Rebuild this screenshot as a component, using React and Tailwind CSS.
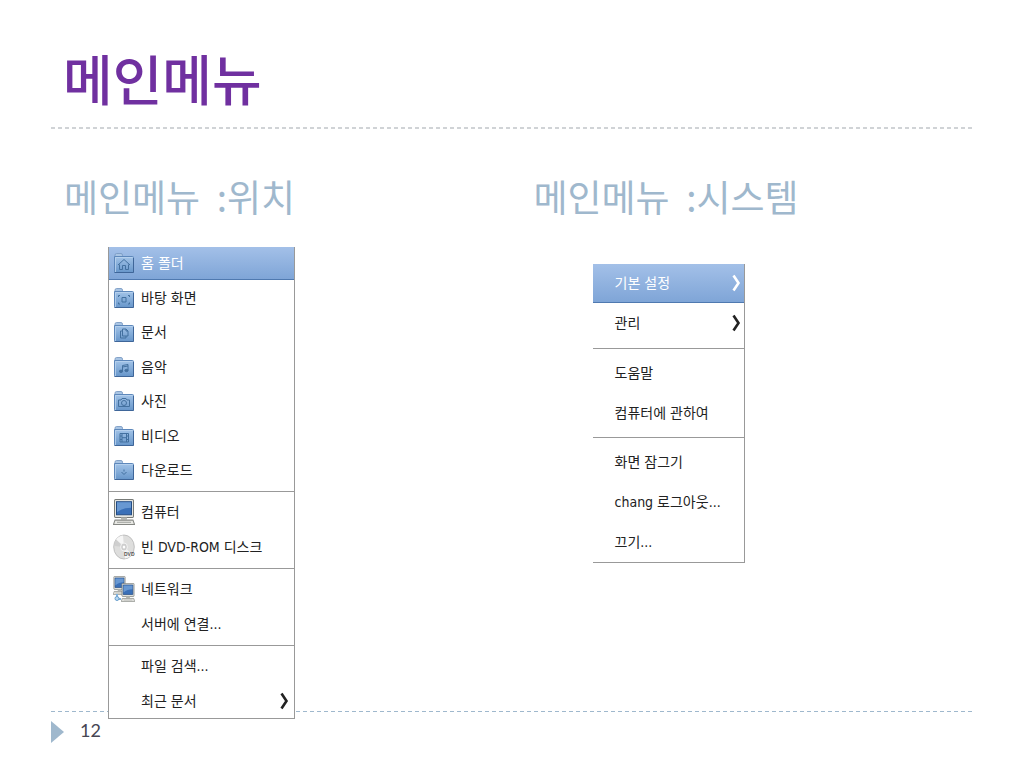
import React from "react";

const Folder = ({ children }) => (
  <svg viewBox="0 0 22 22" className="size-[22px]" aria-hidden="true">
    <defs>
      <linearGradient id="folder" x1="0" y1="0" x2="0" y2="1">
        <stop offset="0" stopColor="#a3c4e8" />
        <stop offset="1" stopColor="#6796ca" />
      </linearGradient>
    </defs>
    <path d="M2 6V3.2Q2 1.5 3.5 1.5H8Q9.5 1.5 9.5 3.2V6Z" fill="#a9c5e4" stroke="#7c9cc4" strokeWidth=".9" />
    <path d="M1.5 4.5H19.5Q20.5 4.5 20.5 5.5V19.5Q20.5 20.5 19.5 20.5H2.5Q1.5 20.5 1.5 19.5Z" fill="url(#folder)" stroke="#5e88bb" />
    <path d="M2.5 20V5.5H19.5" fill="none" stroke="#bbd4ef" strokeWidth=".8" />
    <path d="M1.5 20.5H20.5V6" fill="none" stroke="#3f6699" />
    <g fill="none" stroke="#43709f" strokeWidth="1">{children}</g>
  </svg>
);

const Home = () => (
  <Folder>
    <path d="M5 13L11 7.5L17 13M6.5 12.5V17.5H9.5V13.5H12.5V17.5H15.500V12.5" />
  </Folder>
);

const Desktop = () => (
  <Folder>
    <path d="M9 10.5H13V15H9ZM5.5 10V8.5H7M15 8.5H16.5V10M5.5 15.5V17H7M15 17H16.5V15.5" />
  </Folder>
);

const Documents = () => (
  <Folder>
    <path d="M9.5 8H13L15 10V15H9.5ZM13 8V10H15M9.5 10H7.5V17H13V15" />
  </Folder>
);

const Music = () => (
  <Folder>
    <path d="M9.5 15V9.5L15 8.5V14M9.5 11L15 10" />
    <ellipse cx="8" cy="15.3" rx="1.6" ry="1.2" fill="#43709f" />
    <ellipse cx="13.5" cy="14.5" rx="1.6" ry="1.2" fill="#43709f" />
  </Folder>
);

const Pictures = () => (
  <Folder>
    <path d="M5.5 10H8L9 8.5H13L14 10H16.5V16.5H5.5Z" />
    <circle cx="11" cy="13" r="2.5" />
  </Folder>
);

const Videos = () => (
  <Folder>
    <path d="M7 8.5H15.5V17H7ZM9 8.5V17M13.5 8.5V17M9 12.7H13.5M7 11H9M7 14.5H9M13.5 11H15.5M13.5 14.5H15.5" />
  </Folder>
);

const Downloads = () => (
  <Folder>
    <path d="M11 10.5V12.5M8.5 13L11 15.5L13.5 13" />
  </Folder>
);

const Screen = () => (
  <>
    <path d="M2.5 .5H19.5Q20.5 .5 20.5 1.5V16Q20.5 17 19.5 17H2.5Q1.5 17 1.5 16V1.5Q1.5 .5 2.5 .5Z" fill="#e4e5e1" stroke="#777a77" />
    <path d="M3.5 2.5H18.5V14.5H3.5Z" fill="#3a70b8" stroke="#234c84" />
    <path d="M4 3H18V8Q10 8 4 12Z" fill="#6898d2" />
    <path d="M8 17H14V19H8Z" fill="#b5b7b2" />
    <path d="M2 19.5H20L21.5 23.5H.5Z" fill="#e8e8e4" stroke="#858783" />
    <path d="M4 21.5H18" stroke="#a4a6a2" />
  </>
);

const Computer = () => (
  <svg viewBox="0 0 22 24" className="h-[26px] w-[22px]" preserveAspectRatio="none" aria-hidden="true">
    <Screen />
  </svg>
);

const Disc = () => (
  <svg viewBox="0 0 22 26" className="h-[26px] w-[22px]" aria-hidden="true">
    <ellipse cx="11" cy="13" rx="10.3" ry="12" fill="#dededd" stroke="#b4b4b4" strokeWidth=".8" />
    <path d="M11 13L3 5.5Q6 1.8 10 1.5ZM11 13L19 20Q16 24 12 24.5Z" fill="#f6f6f6" />
    <path d="M11 13L1.5 12Q1.5 8 3 5.5Z" fill="#cfcfcf" />
    <ellipse cx="11" cy="13" rx="3.4" ry="4" fill="#cdcdcd" stroke="#f4f4f4" />
    <ellipse cx="11" cy="13" rx="1.3" ry="1.6" fill="#fff" />
    <text x="11" y="22" fontSize="5" fontWeight="bold" fill="#555" fontFamily="Liberation Sans, sans-serif">DVD</text>
  </svg>
);

const Network = () => (
  <svg viewBox="0 0 22 26" className="h-[26px] w-[22px]" aria-hidden="true">
    <svg width="13" height="19" viewBox="0 0 22 24" preserveAspectRatio="none">
      <Screen />
    </svg>
    <svg x="8" y="7" width="14" height="19" viewBox="0 0 22 24" preserveAspectRatio="none">
      <Screen />
    </svg>
    <path d="M4 18V23H8" fill="none" stroke="#7fb2df" strokeWidth="2" />
    <circle cx="4" cy="22.5" r="2" fill="#b9d8f0" stroke="#6a9fcd" />
  </svg>
);

const Arrow = () => (
  <svg viewBox="0 0 10 18" className="ml-auto h-[18px] w-[10px]" aria-hidden="true">
    <path d="M1.5 1.500L6.5 9L1.5 16.5" fill="none" stroke="currentColor" strokeWidth="2.6" />
  </svg>
);

const places = [
  [
    { label: "홈 폴더", icon: <Home />, active: true },
    { label: "바탕 화면", icon: <Desktop /> },
    { label: "문서", icon: <Documents /> },
    { label: "음악", icon: <Music /> },
    { label: "사진", icon: <Pictures /> },
    { label: "비디오", icon: <Videos /> },
    { label: "다운로드", icon: <Downloads /> },
  ],
  [
    { label: "컴퓨터", icon: <Computer /> },
    { label: "빈 DVD-ROM 디스크", icon: <Disc /> },
  ],
  [
    { label: "네트워크", icon: <Network /> },
    { label: "서버에 연결..." },
  ],
  [
    { label: "파일 검색..." },
    { label: "최근 문서", sub: true },
  ],
];

const system = [
  [
    { label: "기본 설정", sub: true, active: true },
    { label: "관리", sub: true },
  ],
  [{ label: "도움말" }, { label: "컴퓨터에 관하여" }],
  [{ label: "화면 잠그기" }, { label: "chang 로그아웃..." }, { label: "끄기..." }],
];

const activeRow = "border-b border-[#4f79b0] bg-linear-to-b from-[#a3c0e8] to-[#7fa5d7] text-white";
const menuText = "text-sm text-[#222] font-['DejaVu_Sans_Condensed','Noto_Sans_CJK_KR',sans-serif]";

const PlacesMenu = () => (
  <nav aria-label="위치" className={`relative z-10 ml-11 w-[187px] border-x border-b border-[#999] bg-white ${menuText}`}>
    {places.map((group, i) => (
      <ul key={i} className="border-t border-[#999] pt-[3px] pb-1 first:border-t-0 first:pt-0 last:pb-0">
        {group.map((item) => (
          <li key={item.label} className={item.active ? "h-[33px]" : "h-[34px] even:h-[35px]"}>
            <button
              type="button"
              className={`flex h-full w-full items-center pr-1 pl-1 text-left ${item.active ? activeRow : ""}`}
            >
              <span className="mr-1.5 flex w-[22px] shrink-0 justify-center">{item.icon}</span>
              <span className="whitespace-nowrap">{item.label}</span>
              {item.sub && <Arrow />}
            </button>
          </li>
        ))}
      </ul>
    ))}
  </nav>
);

const SystemMenu = () => (
  <nav aria-label="시스템" className={`ml-[59px] w-[152px] border-r border-b border-[#999] bg-white ${menuText}`}>
    {system.map((group, i) => (
      <ul key={i} className="border-t border-[#999] py-1 first:border-t-0 first:pt-0 first:pb-[5px] last:pb-0">
        {group.map((item) => (
          <li key={item.label} className={item.active ? "h-[39px]" : "h-10"}>
            <button
              type="button"
              className={`flex h-full w-full items-center pr-0.5 pl-[22px] text-left ${item.active ? activeRow : ""}`}
            >
              <span className="whitespace-nowrap">{item.label}</span>
              {item.sub && <Arrow />}
            </button>
          </li>
        ))}
      </ul>
    ))}
  </nav>
);

export default function App() {
  return (
    <div className="bg-white px-[51px] pt-[38px] font-['Noto_Sans_CJK_KR',sans-serif]">
      <header>
        <h1 className="pl-3 text-[54px] leading-[80px] font-medium text-[#7030a0]">메인메뉴</h1>
        <div className="mt-[9px] h-[2px] bg-[repeating-linear-gradient(90deg,#d0d3d6_0_4px,transparent_4px_7px)]" />
      </header>

      <main className="grid grid-cols-2 gap-[30px] pt-[42px] pl-[13px]">
        <section>
          <h2 className="text-[37px] leading-[50px] whitespace-pre text-[#9fb8cd]">메인메뉴  :위치</h2>
          <div className="pt-[26px]">
            <PlacesMenu />
          </div>
        </section>
        <section>
          <h2 className="text-[37px] leading-[50px] whitespace-pre text-[#9fb8cd]">메인메뉴  :시스템</h2>
          <div className="pt-[43px]">
            <SystemMenu />
          </div>
        </section>
      </main>

      <footer className="-mt-2">
        <div className="h-px bg-[repeating-linear-gradient(90deg,#9fb8cd_0_4px,transparent_4px_7px)]" />
        <div className="flex items-center gap-4 pt-2">
          <svg viewBox="0 0 13 22" className="h-[22px] w-[13px]" aria-hidden="true">
            <path d="M0 0L13 11L0 22Z" fill="#9fb8cd" />
          </svg>
          <span className="pb-1 font-[Lato,sans-serif] text-lg leading-5 text-[#464653]">12</span>
        </div>
      </footer>
    </div>
  );
}
